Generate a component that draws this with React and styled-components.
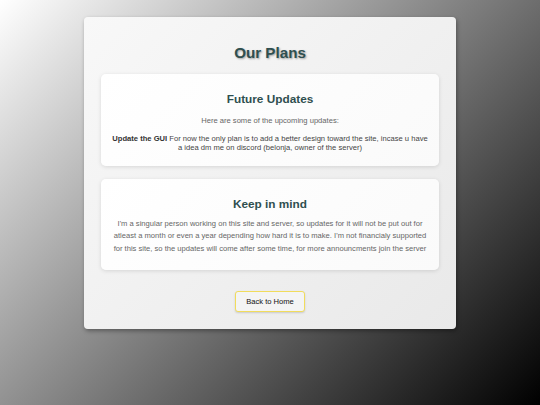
import { createGlobalStyle, styled } from "styled-components";

const Global = createGlobalStyle`
   html, body {
      margin: 0;
      padding: 0;
      min-height: 100%;
   }
   body {
      height: 405px;
      background: linear-gradient(135deg, #ffffff 0%, #000000 100%);
      font-family: "Liberation Sans", Arial, Helvetica, sans-serif;
   }
`

const Page = styled.div`
   display: flex;
   justify-content: center;
   padding-top: 17px;
`

const Container = styled.div`
   width: 338px;
   padding: 27px 17px 17px;
   background: linear-gradient(135deg, #f8f8f8 0%, #e9e9e9 100%);
   border-radius: 4px;
   box-shadow: 1px 2px 4px rgba(0, 0, 0, 0.35);
   display: flex;
   flex-direction: column;
   align-items: stretch;
`

const Title = styled.h1`
   margin: 0 0 13px;
   font-size: 15.2px;
   line-height: 17px;
   font-weight: bold;
   text-align: center;
   color: #2f4f4f;
   text-shadow: 1px 1px 2px rgba(0, 0, 0, 0.35);
`

const Card = styled.section`
   background: linear-gradient(135deg, #ffffff 0%, #fafafa 100%);
   border-radius: 5px;
   box-shadow: 0 1px 4px rgba(0, 0, 0, 0.12);
   padding: ${(p) => p.$pad};
   text-align: center;
   & + & {
      margin-top: 13px;
   }
`

const CardTitle = styled.h2`
   margin: 0;
   font-size: 11.8px;
   line-height: 13.5px;
   font-weight: bold;
   color: #2f4f4f;
`

const Text = styled.p`
   margin: ${(p) => p.$margin || "9px 0 0"};
   font-size: 7.6px;
   line-height: ${(p) => p.$lh || "9px"};
   color: ${(p) => p.$color || "#666"};
`

const Strong = styled.strong`
   color: #333;
`

const Actions = styled.div`
   display: flex;
   justify-content: center;
   margin-top: 21px;
`

const Button = styled.button`
   font-family: "Liberation Sans", Arial, Helvetica, sans-serif;
   font-size: 7.6px;
   line-height: 9px;
   color: #111;
   background: #f4f4f4;
   border: 1.3px solid #f1dc5c;
   border-radius: 3px;
   padding: 5px 10px;
   box-shadow: 0 1px 2px rgba(0, 0, 0, 0.15);
   cursor: pointer;
`

export default function App() {
   return (
      <>
         <Global />
         <Page>
            <Container>
               <Title>Our Plans</Title>

               <Card $pad="19px 9px 14px">
                  <CardTitle>Future Updates</CardTitle>
                  <Text>Here are some of the upcoming updates:</Text>
                  <Text $color="#444">
                     <Strong>Update the GUI</Strong> For now the only plan is to add a better design toward the site, incase u have a idea dm me on discord (belonja, owner of the server)
                  </Text>
               </Card>

               <Card $pad="19px 9px 15px">
                  <CardTitle>Keep in mind</CardTitle>
                  <Text $margin="7px 0 0" $lh="12.3px">
                     I'm a singular person working on this site and server, so updates for it will not be put out for atleast a month or even a year depending how hard it is to make. I'm not financialy supported for this site, so the updates will come after some time, for more announcments join the server
                  </Text>
               </Card>

               <Actions>
                  <Button>Back to Home</Button>
               </Actions>
            </Container>
         </Page>
      </>
   )
}
